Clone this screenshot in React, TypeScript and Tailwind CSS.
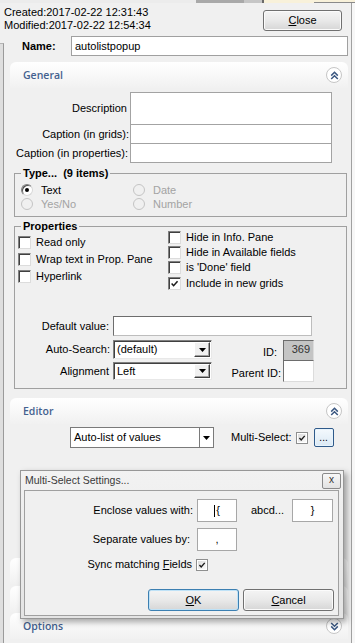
import React from "react";

const CheckMark = ({ size = 9 }: { size?: number }) => (
  <svg width={size} height={size} viewBox="0 0 10 10">
    <path d="M1.8 5 L4 7.4 L8.4 2.4" fill="none" stroke="#1a1a1a" strokeWidth="1.7" />
  </svg>
);

const DownArrow = () => (
  <svg width="7" height="4" viewBox="0 0 7 4">
    <polygon points="0,0 7,0 3.5,4" fill="#000" />
  </svg>
);

const CollapseBtn = ({ down }: { down?: boolean }) => (
  <div className="w-[16px] h-[16px] rounded-full bg-white border border-[#c6c6c6] flex items-center justify-center">
    <svg width="9" height="9" viewBox="0 0 9 9" className={down ? "rotate-180" : ""}>
      <path d="M1.2 4.6 L4.5 1.3 L7.8 4.6 M1.2 8 L4.5 4.7 L7.8 8" fill="none" stroke="#3b5882" strokeWidth="1.5" />
    </svg>
  </div>
);

const PanelHeader = ({ title, down, noBtn }: { title: string; down?: boolean; noBtn?: boolean }) => (
  <div className="h-[26px] flex items-center justify-between pl-[13px] pr-[6px] bg-linear-to-b from-white to-[#f1f1f1] rounded-t-[6px]">
    <span className="font-['Open_Sans',sans-serif] font-semibold text-[10.5px] text-[#43618f]">{title}</span>
    {!noBtn && <CollapseBtn down={down} />}
  </div>
);

const Radio = ({ label, checked, disabled }: { label: string; checked?: boolean; disabled?: boolean }) => (
  <div className="h-[14px] flex items-center">
    <div
      className={
        disabled
          ? "w-[12px] h-[12px] rounded-full border border-[#c4c4c4] bg-[#f0f0f0]"
          : "w-[12px] h-[12px] rounded-full border border-[#808080] border-r-[#d8d8d8] border-b-[#d8d8d8] bg-white shadow-[inset_1px_1px_0_#505050] flex items-center justify-center"
      }
    >
      {checked && <div className="w-[4px] h-[4px] rounded-full bg-black" />}
    </div>
    <span className={disabled ? "ml-[8px] text-[#a3a3a3]" : "ml-[8px]"}>{label}</span>
  </div>
);

const ClassicCheck = ({ label, checked, className }: { label: string; checked?: boolean; className: string }) => (
  <div className={"flex items-center " + className}>
    <div className="w-[13px] h-[13px] bg-white border border-[#808080] border-r-[#dcdcdc] border-b-[#dcdcdc] shadow-[inset_1px_1px_0_#404040] flex items-center justify-center">
      {checked && <CheckMark size={9} />}
    </div>
    <span className="ml-[5px]">{label}</span>
  </div>
);

const FlatCheck = () => (
  <div className="w-[12px] h-[12px] border border-[#8e8f8f] bg-white p-[1px]">
    <div className="w-full h-full bg-linear-to-br from-[#dcdcdc] to-[#fbfbfb] flex items-center justify-center">
      <CheckMark size={8} />
    </div>
  </div>
);

const ClassicCombo = ({ value, h }: { value: string; h: string }) => (
  <div className={"w-[99px] flex bg-white border border-[#808080] border-r-[#e8e8e8] border-b-[#e8e8e8] shadow-[inset_1px_1px_0_#404040] " + h}>
    <div className="flex-1 pl-[3px] pt-[2px]">{value}</div>
    <div className="w-[16px] my-[1px] mr-[1px] bg-[#f0f0f0] border border-white border-r-[#404040] border-b-[#404040] shadow-[inset_-1px_-1px_0_#a0a0a0] flex items-center justify-center">
      <DownArrow />
    </div>
  </div>
);

const WinButton = ({ children, def, className }: { children: React.ReactNode; def?: boolean; className: string }) => (
  <div
    className={
      (def
        ? "border-[#3c7fb1] shadow-[inset_0_0_0_1px_#bfe2f7] "
        : "border-[#707070] shadow-[inset_0_0_0_1px_#fbfbfb] ") +
      "border rounded-[3px] bg-linear-to-b from-[#f4f4f4] via-[#e9e9e9] to-[#d6d6d6] flex items-center justify-center " +
      className
    }
  >
    {children}
  </div>
);

const Dialog = () => (
  <div className="absolute left-[20px] top-[470px] w-[324px] h-[149px] bg-linear-to-b from-[#f2f2f2] to-[#e4e4e4] border border-[#979797] shadow-[3px_3px_6px_rgba(0,0,0,0.35)] flex flex-col">
    <div className="h-[19px] flex items-center justify-between pl-[4px] pr-[2px]">
      <span className="text-[10.5px] text-[#3a3a3a]">Multi-Select Settings...</span>
      <div className="w-[19px] h-[16px] border border-[#8a8a8a] rounded-[2px] bg-linear-to-b from-[#f7f7f7] to-[#e2e2e2] flex items-center justify-center text-[10px] leading-[10px] text-[#333] pb-[2px]">
        x
      </div>
    </div>
    <div className="ml-[3px] w-[315px] h-[126px] bg-[#f0f0f0] border border-[#a0a0a0] pt-[8px]">
      <div className="flex items-center h-[23px]">
        <div className="w-[172px] text-right pr-[4px]">Enclose values with:</div>
        <div className="w-[40px] h-[23px] bg-white border border-[#a7a7a7] flex items-center justify-center">
          <span className="w-[1px] h-[12px] bg-black mr-[1px]" />
          <span>{"{"}</span>
        </div>
        <span className="w-[55px] pl-[14px]">abcd...</span>
        <div className="w-[41px] h-[23px] bg-white border border-[#a7a7a7] flex items-center justify-center">{"}"}</div>
      </div>
      <div className="flex items-center h-[23px] mt-[6px]">
        <div className="w-[172px] text-right pr-[7px]">Separate values by:</div>
        <div className="w-[40px] h-[23px] bg-white border border-[#a7a7a7] flex items-center justify-center">,</div>
      </div>
      <div className="flex items-center h-[13px] mt-[7px]">
        <div className="w-[171px] text-right pr-[4px]">
          Sync matching <span className="underline">F</span>ields
        </div>
        <FlatCheck />
      </div>
      <div className="flex justify-end gap-[4px] pr-[4px] mt-[18px]">
        <WinButton def className="w-[91px] h-[22px]">
          <span>
            <span className="underline">O</span>K
          </span>
        </WinButton>
        <WinButton className="w-[91px] h-[22px]">
          <span>
            <span className="underline">C</span>ancel
          </span>
        </WinButton>
      </div>
    </div>
  </div>
);

export default function App() {
  return (
    <div className="relative w-[355px] h-[643px] overflow-hidden bg-[#f0f0f0] font-['Liberation_Sans',Arial,sans-serif] text-[11px] leading-[13px] text-black">
      <div className="h-[3px] flex">
        <div className="w-[196px] bg-[#ececec]" />
        <div className="w-[48px] bg-[#a9a9a9]" />
        <div className="w-[18px] bg-[#c6c6c6]" />
        <div className="w-[2px] bg-[#6a6a6a]" />
        <div className="w-[50px] bg-[#f8f1da]" />
        <div className="flex-1 bg-[#f8f1da] border-b border-[#8a8a8a]" />
      </div>
      <div className="flex h-[640px]">
        <div className="flex w-[352px] border-r border-[#a0a0a0]">
          <div className="w-[4px] pt-[40px] flex flex-col">
            <div className="flex-1 bg-[#dedede] border-r border-[#9a9a9a] border-t border-t-[#b4b4b4]" />
          </div>
          <div className="flex-1 flex flex-col">
            <div className="flex justify-between pt-[3px]">
              <div>
                <div>Created:2017-02-22 12:31:43</div>
                <div>Modified:2017-02-22 12:54:34</div>
              </div>
              <WinButton className="mt-[4px] mr-[9px] w-[79px] h-[21px]">
                <span>
                  <span className="underline">C</span>lose
                </span>
              </WinButton>
            </div>

            <div className="flex items-center mt-[4px]">
              <div className="w-[67px] pl-[18px] font-bold">Name:</div>
              <div className="w-[277px] h-[20px] bg-white border border-[#a0a0a0] flex items-center pl-[3px]">
                autolistpopup
              </div>
            </div>

            {/* General */}
            <div className="mt-[6px] ml-[6px] w-[338px]">
              <PanelHeader title="General" />
              <div className="pt-[4px] pb-[4px]">
                <div className="flex items-center">
                  <div className="w-[120px] text-right pr-[3px]">Description</div>
                  <div className="w-[202px] h-[33px] bg-white border border-[#a3a3a3]" />
                </div>
                <div className="flex items-center -mt-[1px]">
                  <div className="w-[120px] text-right pr-[1px]">Caption (in grids):</div>
                  <div className="w-[202px] h-[20px] bg-white border border-[#a3a3a3]" />
                </div>
                <div className="flex items-center -mt-[1px]">
                  <div className="w-[120px] text-right pr-[2px]">Caption (in properties):</div>
                  <div className="w-[202px] h-[20px] bg-white border border-[#a3a3a3]" />
                </div>

                <fieldset className="ml-[4px] w-[333px] mt-[4px] border border-[#a0a0a0] pb-[5px]">
                  <legend className="ml-[6px] px-[2px] font-bold whitespace-pre">Type...  (9 items)</legend>
                  <div className="pt-[3px] flex">
                    <div className="w-[118px] pl-[6px]">
                      <Radio checked label="Text" />
                      <Radio disabled label="Yes/No" />
                    </div>
                    <div>
                      <Radio disabled label="Date" />
                      <Radio disabled label="Number" />
                    </div>
                  </div>
                </fieldset>

                <fieldset className="ml-[4px] w-[333px] mt-[3px] border border-[#a0a0a0] pb-[6px]">
                  <legend className="ml-[6px] px-[2px] font-bold">Properties</legend>
                  <div className="flex h-[83px]">
                    <div className="w-[153px] pl-[3px] pt-[1px]">
                      <ClassicCheck className="h-[17px]" label="Read only" />
                      <ClassicCheck className="h-[17px]" label="Wrap text in Prop. Pane" />
                      <ClassicCheck className="h-[17px]" label="Hyperlink" />
                    </div>
                    <div className="-mt-[3px]">
                      <ClassicCheck className="h-[15px]" label="Hide in Info. Pane" />
                      <ClassicCheck className="h-[15px]" label="Hide in Available fields" />
                      <ClassicCheck className="h-[15px]" label="is 'Done' field" />
                      <ClassicCheck className="h-[16px]" checked label="Include in new grids" />
                    </div>
                  </div>
                  <div className="flex items-center h-[20px]">
                    <div className="w-[98px] text-right pr-[4px]">Default value:</div>
                    <div className="w-[199px] h-[20px] bg-white border border-[#6d6d6d] border-r-[#bdbdbd] border-b-[#bdbdbd]" />
                  </div>
                  <div className="flex mt-[4px]">
                    <div className="w-[215px]">
                      <div className="flex items-center h-[19px]">
                        <div className="w-[98px] text-right pr-[3px]">Auto-Search:</div>
                        <ClassicCombo value="(default)" h="h-[19px]" />
                      </div>
                      <div className="flex items-center h-[18px] mt-[3px]">
                        <div className="w-[98px] text-right pr-[4px]">Alignment</div>
                        <ClassicCombo value="Left" h="h-[18px]" />
                      </div>
                    </div>
                    <div>
                      <div className="flex items-center">
                        <div className="w-[53px] text-right pr-[6px] pt-[3px]">ID:</div>
                        <div className="w-[31px] h-[21px] bg-[#c4c4c4] border border-[#6d6d6d] border-r-[#dcdcdc] border-b-[#9a9a9a] text-right pr-[3px] pt-[2px] text-[#333]">
                          369
                        </div>
                      </div>
                      <div className="flex items-center -mt-[1px]">
                        <div className="w-[53px] text-right pr-[2px] pt-[4px]">Parent ID:</div>
                        <div className="w-[31px] h-[22px] bg-white border border-[#6d6d6d] border-r-[#dcdcdc] border-b-[#dcdcdc]" />
                      </div>
                    </div>
                  </div>
                </fieldset>
              </div>
            </div>

            {/* Editor */}
            <div className="mt-[5px] ml-[6px] w-[338px]">
              <PanelHeader title="Editor" />
              <div className="h-[132px] pt-[3px]">
                <div className="flex items-center h-[21px] pl-[60px]">
                  <div className="w-[144px] h-[21px] bg-white border border-[#7a7a7a] flex">
                    <div className="flex-1 pl-[3px] flex items-center">Auto-list of values</div>
                    <div className="w-[14px] border-l border-[#7a7a7a] flex items-center justify-center">
                      <DownArrow />
                    </div>
                  </div>
                  <span className="ml-[17px]">Multi-Select:</span>
                  <div className="ml-[4px]">
                    <FlatCheck />
                  </div>
                  <div className="ml-[6px] w-[20px] h-[19px] rounded-[2px] border border-[#2f5a8a] bg-linear-to-b from-[#f4f9fd] to-[#dbe9f5] shadow-[inset_0_0_0_1px_#e8f4fc] flex items-end justify-center pb-[3px] text-[10px] leading-[10px]">
                    ...
                  </div>
                </div>
              </div>
            </div>

            <div className="mt-[2px] ml-[6px] w-[338px]">
              <PanelHeader title="" noBtn />
            </div>
            <div className="mt-[2px] ml-[6px] w-[338px]">
              <PanelHeader title="" noBtn />
            </div>
            <div className="mt-[1px] ml-[6px] w-[338px]">
              <PanelHeader title="Options" down />
            </div>
          </div>
        </div>
        <div className="flex-1 bg-[#f7f7f7]" />
      </div>
      <Dialog />
    </div>
  );
}
